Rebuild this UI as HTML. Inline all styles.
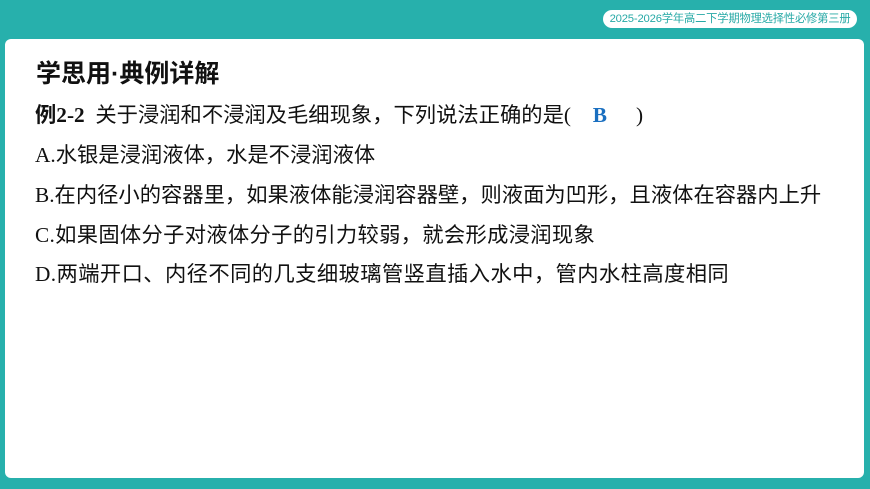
<!DOCTYPE html>
<html><head><meta charset="utf-8"><style>
body{margin:0;width:870px;height:489px;background:#27b0ac;position:relative;overflow:hidden;font-family:"Liberation Serif","Noto Serif CJK SC",serif;}
.panel{position:absolute;left:5px;top:39px;width:859px;height:439px;background:#fff;border-radius:6px;}
.badge{position:absolute;left:603px;top:10px;width:254px;height:18px;background:#fff;border-radius:9px;color:#27a9a6;font:11.3px "Liberation Sans","Noto Sans CJK SC",sans-serif;letter-spacing:-0.2px;text-align:center;line-height:18px;white-space:nowrap;}
.t{position:absolute;left:35px;font-size:21.3px;color:#111;white-space:nowrap;font-family:"Liberation Serif","Noto Sans CJK SC",serif;}
h1{position:absolute;left:36px;top:54px;margin:0;font-size:25px;font-weight:bold;font-family:"Liberation Sans","Noto Sans CJK SC",sans-serif;color:#111;}
</style></head><body>
<div class="badge">2025-2026学年高二下学期物理选择性必修第三册</div>
<div class="panel"></div>
<h1>学思用·典例详解</h1>
<div class="t" style="top:98px"><b>例2-2</b>&nbsp; 关于浸润和不浸润及毛细现象，下列说法正确的是(<span style="display:inline-block;width:36px;text-align:right"><b style="color:#1a6fc0">B</b></span><span style="display:inline-block;width:29px"></span>)</div>
<div class="t" style="top:138px">A.水银是浸润液体，水是不浸润液体</div>
<div class="t" style="top:178px">B.在内径小的容器里，如果液体能浸润容器壁，则液面为凹形，且液体在容器内上升</div>
<div class="t" style="top:218px;letter-spacing:0.3px">C.如果固体分子对液体分子的引力较弱，就会形成浸润现象</div>
<div class="t" style="top:257px;letter-spacing:0.4px">D.两端开口、内径不同的几支细玻璃管竖直插入水中，管内水柱高度相同</div>
</body></html>
